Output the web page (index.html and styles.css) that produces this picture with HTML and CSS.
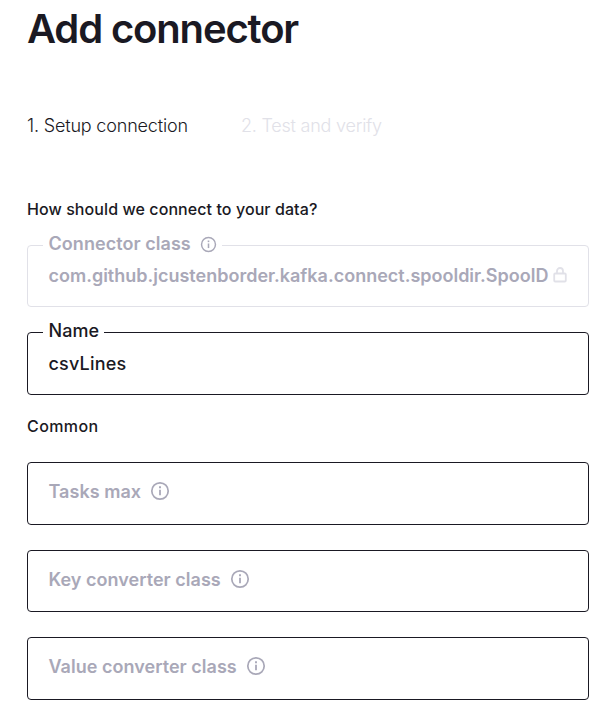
FILE: index.html
```html
<!DOCTYPE html>
<html lang="en">
<head>
<meta charset="utf-8">
<title>Add connector</title>
<link rel="stylesheet" href="styles.css">
</head>
<body>
<svg class="sprite" width="0" height="0"><symbol id="info" viewBox="0 0 20 20"><circle cx="10" cy="10" r="8.2" fill="none" stroke="currentColor" stroke-width="1.7"/><path d="M10 8.8v5.4" stroke="currentColor" stroke-width="1.8"/><path d="M10 5.3v1.9" stroke="currentColor" stroke-width="1.9"/></symbol></svg>
<main class="page">
  <h1 class="title">Add connector</h1>
  <nav class="steps"><span class="step">1. Setup connection</span><span class="step step-inactive">2. Test and verify</span></nav>
  <h2 class="heading">How should we connect to your data?</h2>
  <div class="field field-disabled">
    <label class="legend">Connector class <svg class="info-small"><use href="#info"/></svg></label>
    <span class="value">com.github.jcustenborder.kafka.connect.spooldir.SpoolD</span>
    <svg class="lock" viewBox="0 0 14 16"><rect x="1.2" y="6.5" width="11.6" height="8" rx="1" fill="none" stroke="currentColor" stroke-width="1.8"/><path d="M4 6.5V4a3 3 0 0 1 6 0v2.5" fill="none" stroke="currentColor" stroke-width="1.8"/></svg>
  </div>
  <div class="field field-name">
    <label class="legend">Name</label>
    <span class="value">csvLines</span>
  </div>
  <h2 class="heading heading-common">Common</h2>
  <div class="field field-empty"><span>Tasks max</span><svg class="info"><use href="#info"/></svg></div>
  <div class="field field-empty field-key"><span>Key converter class</span><svg class="info"><use href="#info"/></svg></div>
  <div class="field field-empty"><span>Value converter class</span><svg class="info"><use href="#info"/></svg></div>
</main>
</body>
</html>
```
FILE: styles.css
```css
* { box-sizing: border-box; }
body { margin: 0; background: #fff; color: #1a1923; font-family: Inter, sans-serif; overflow: hidden; }
.sprite { position: absolute; }
.page { padding: 5px 14px 0 27px; }
.title { margin: 0; font-size: 40px; line-height: 48px; font-weight: 600; letter-spacing: -1.15px; }
.steps { display: flex; gap: 53px; margin-top: 61px; font-size: 18px; line-height: 24px; font-weight: 300; letter-spacing: -0.17px; white-space: nowrap; }
.step-inactive { color: #e1e1e8; letter-spacing: -0.22px; }
.heading { margin: 59px 0 0; font-size: 16px; line-height: 24px; font-weight: 550; letter-spacing: 0.08px; }
.field { position: relative; display: flex; align-items: center; height: 63px; padding: 0 20px 0 20.5px; border: 1px solid #1a1923; border-radius: 4px; font-size: 18px; font-weight: 600; white-space: nowrap; }
.legend { position: absolute; top: -14px; left: 15px; display: flex; align-items: center; gap: 9px; padding: 0 5px 0 5.5px; background: #fff; line-height: 24px; letter-spacing: 0.05px; }
.field-disabled { height: 62px; margin-top: 24px; border-color: #e1e1e8; color: #a9a8b8; }
.value { line-height: 24px; }
.info-small { width: 17px; height: 17px; margin-top: 1px; }
.lock { width: 14px; height: 16px; margin: -3px 0 0 4.5px; color: #e1e1e8; flex: none; }
.field-name { margin-top: 25px; font-weight: 550; }
.field-name .value { letter-spacing: 0.2px; }
.heading-common { margin: 19px 0 24px; letter-spacing: 0.4px; }
.field-empty { gap: 9px; margin-bottom: 25px; padding-bottom: 4px; color: #a9a8b8; letter-spacing: 0.03px; }
.field-key { height: 62px; }
.info { width: 20px; height: 20px; margin-top: -1px; }
```
